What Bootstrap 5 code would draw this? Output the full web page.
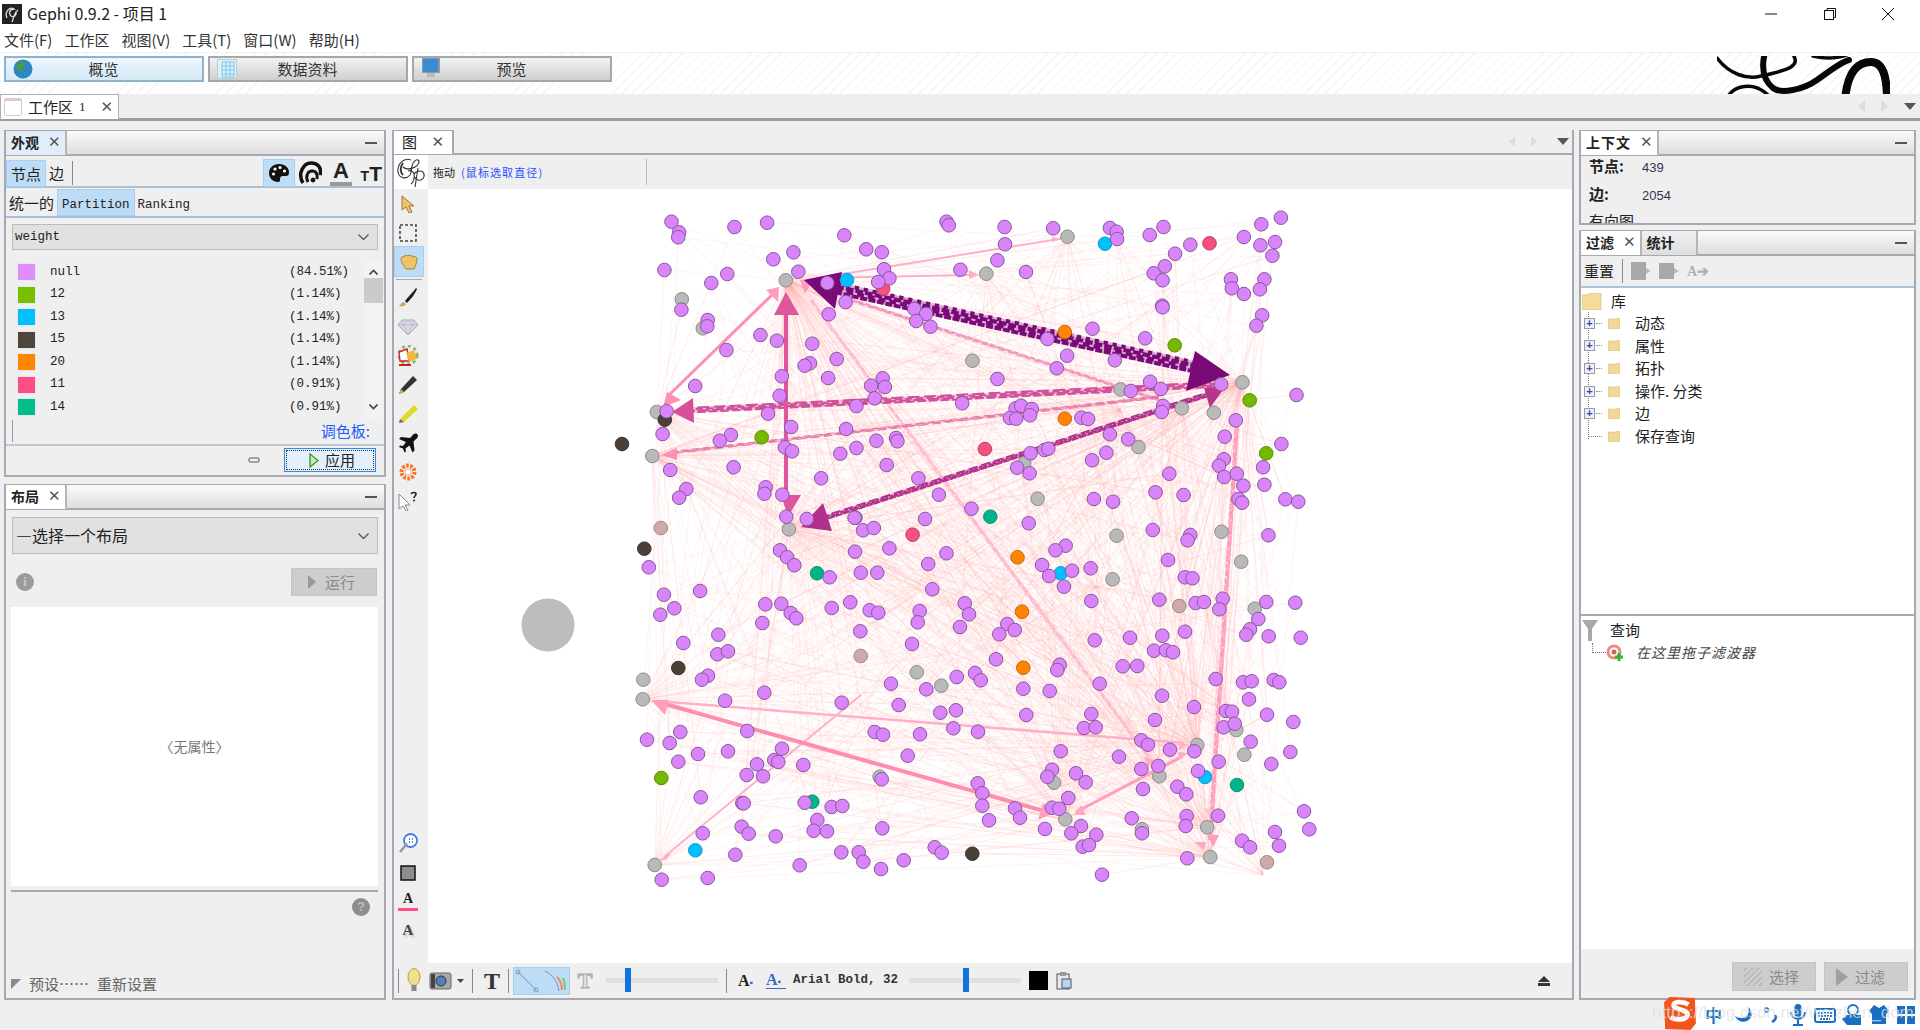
<!DOCTYPE html>
<html lang="zh-CN">
<head>
    <meta charset="UTF-8">
    <title>Gephi 0.9.2 - 项目 1</title>
    <link href="https://cdn.jsdelivr.net/npm/bootstrap@5.3.0/dist/css/bootstrap.min.css" rel="stylesheet">
    <style>
        html, body { height: 1030px; overflow: hidden; background: #efefef; }
        body { font-family: "Noto Sans CJK SC", "Liberation Sans", sans-serif; font-size: 14px; color: #222; }
        svg { display: block; flex: none; }
        .app-shell { width: 1920px; height: 1030px; }
        .title-row { height: 28px; background: #fff; padding-left: 2px; }
        .title-text { font-size: 16px; margin: -2px 0 0 5px; font-family: "Noto Sans CJK SC", "Open Sans", sans-serif; line-height: 1; }
        .win-ctrls { margin-left: auto; width: 155px; padding-right: 26px; }
        .menu-row { height: 24px; background: #fff; padding-left: 4px; gap: 12px; font-size: 15px; color: #333; line-height: 24px; }
        .persp-row { height: 42px; background: repeating-linear-gradient(135deg, #fff 0 6px, #f4f4f4 6px 7px); border-top: 1px solid #f2f2f2; padding: 3px 0 0 4px; overflow: hidden; gap: 4px; }
        .persp-btn { width: 200px; height: 26px; border: 2px solid #a4a7ae; background: linear-gradient(#f2f2f2, #cfcfcf); padding-left: 7px; color: #333; font-size: 15px; line-height: 22px; }
        .persp-btn.is-on { border-color: #8db4cf; background: linear-gradient(#eef6fc, #d4e8f6); }
        .persp-btn span { flex: 1; text-align: center; padding-right: 28px; }
        .big-logo { margin-left: auto; margin-right: 30px; }
        .doc-strip { height: 27px; border-bottom: 3px solid #9b9ea5; background: #efefef; }
        .doc-tab { width: 119px; height: 25px; background: #fff; border: 1px solid #b0b2b8; border-bottom: 0; padding-left: 3px; font-size: 15px; line-height: 24px; }
        .doc-tab .tab-no { font-family: "Liberation Serif", serif; font-size: 13px; margin-left: 6px; }
        .close-x { font-family: "DejaVu Sans", sans-serif; font-size: 15px; color: #555; line-height: 1; }
        .work-area { height: 879px; padding: 9px 4px 0 4px; gap: 6px; }
        .col-left { width: 382px; gap: 7px; }
        .col-center { width: 1182px; }
        .col-right { width: 337px; margin-left: -1px; gap: 5px; }
        .dock { border: 2px solid #a6a9b1; border-top-width: 1px; background: #efefef; overflow: hidden; }
        .dock-head { height: 25px; flex: none; border-bottom: 2px solid #a6a9b1; background: linear-gradient(#fafafa, #dedede); }
        .dock-tab { height: 24px; padding: 0 4px 0 5px; gap: 9px; font-weight: 700; font-size: 14px; line-height: 23px; background: #fff; border-right: 2px solid #b3b5bb; }
        .dock-tab.is-on { background: #e1eefa; }
        .dock-tab.is-off { background: linear-gradient(#f0f0f0, #dedede); }
        .min-dash { width: 12px; height: 2px; background: #555; margin: 0 7px 0 auto; }
        .tool-row { height: 32px; flex: none; border-bottom: 2px solid #a9c0d4; padding: 5px 2px 1px 1px; }
        .hi-box { background: #bddcf5; outline: 1px solid #a6d0f0; }
        .mode-row { height: 30px; flex: none; border-bottom: 2px solid #a9c0d4; padding: 2px 3px 1px; line-height: 25px; }
        .mode-row .serif-mono { height: 25px; line-height: 30px; }
        .serif-mono { font-family: "Liberation Mono", "Noto Sans CJK SC", monospace; font-size: 12.5px; }
        .drop-box { background: #e1e1e1; border: 1px solid #bcbcbc; }
        .weight-box { height: 26px; margin: 6px 6px 11px 6px; padding-left: 2px; line-height: 24px; }
        .legend-rows { flex: 1; padding: 0 0 0 11px; }
        .legend-row { height: 22.5px; }
        .swatch { width: 19px; height: 18px; flex: none; margin-right: 14px; border: 1px solid #e8e8e8; }
        .legend-pct { width: 75px; margin-left: auto; }
        .fake-scroll { width: 19px; margin-right: 1px; background: #f2f2f2; }
        .scroll-thumb { height: 25px; background: #cbcbcb; margin-top: 3px; }
        .palette-row { height: 28px; flex: none; border-bottom: 2px solid #bcc8d4; padding: 0 14px 0 6px; }
        .palette-tick { width: 1px; height: 22px; background: #999; }
        .palette-link { color: #1f5bff; font-size: 15px; margin-left: auto; letter-spacing: 0; }
        .apply-row { padding: 2px 8px 0 0; }
        .apply-btn { width: 92px; height: 24px; border: 1px solid #2b8fe6; background: #e3f0fb; outline: 1px dotted #333; outline-offset: -3px; padding-left: 24px; gap: 6px; line-height: 22px; font-size: 15px; }
        .layout-select { height: 37px; margin: 7px 6px 0 6px; padding-left: 3px; font-size: 16px; line-height: 35px; }
        .layout-run { padding: 14px 7px 11px 6px; }
        .info-dot { width: 18px; height: 18px; border-radius: 50%; background: #9b9b9b; color: #ccc; font: 700 12px/18px "Liberation Serif", serif; text-align: center; }
        .idle-btn { background: #cdcdcd; border: 1px solid #c4c4c4; color: #8a8a8a; font-size: 15px; line-height: 26px; }
        .run-btn { width: 86px; height: 28px; padding-left: 15px; gap: 8px; }
        .prop-box { height: 279px; flex: none; background: #fff; margin: 0 6px 0 5px; color: #777; font-size: 14px; }
        .prop-rule { height: 2px; flex: none; background: #a8a8a8; margin: 4px 6px 0 5px; }
        .help-dot { width: 18px; height: 18px; border-radius: 50%; background: #8d8d8d; color: #bdbdbd; font: 700 13px/18px "Liberation Sans", sans-serif; text-align: center; margin: 6px 14px 0 auto; }
        .preset-row { margin-top: auto; padding: 0 0 3px 5px; color: #666; font-size: 15px; line-height: 22px; }
        .graph-head { height: 25px; flex: none; border-bottom: 2px solid #a6a9b1; border-top: 0; padding-right: 3px; }
        .graph-tab { width: 60px; height: 25px; background: #fff; border: 2px solid #a6a9b1; border-bottom: 0; border-left: 0; padding: 0 8px 0 8px; font-size: 15px; }
        .graph-side { width: 34px; flex: none; background: #efefef; padding-bottom: 18px; }
        .side-logo { height: 34px; flex: none; background: #fff; }
        .side-cell { height: 29px; flex: none; margin-right: 6px; }
        .side-cell.hi-box { margin: 0 5px 0 1px; }
        .side-sep { height: 1px; background: #aaa; margin: 3px 6px 3px 2px; flex: none; }
        .graph-top { height: 34px; flex: none; background: #efefef; font-size: 11px; gap: 6px; padding-left: 5px; }
        .graph-top-end { width: 1px; height: 26px; background: #bbb; margin-left: 97px; }
        .graph-hint { color: #2a50ff; letter-spacing: 1.1px; }
        .graph-canvas { flex: 1; background: #fff; overflow: hidden; }
        .graph-bottom { height: 35px; flex: none; padding-left: 4px; }
        .bar-sep { width: 1px; height: 24px; background: #888; flex: none; }
        .hi-pair { height: 28px; width: 57px; background: #bddcf5; border: 1px solid #a6d0f0; }
        .bar-slider { width: 112px; height: 5px; background: #e0e0e0; flex: none; }
        .bar-thumb { width: 6px; height: 24px; background: #0f74dc; margin-top: -10px; }
        .font-tag { font-family: "Liberation Mono", monospace; font-size: 12.5px; width: 112px; white-space: nowrap; font-weight: 700; color: #333; }
        .black-chip { width: 19px; height: 19px; background: #000; flex: none; }
        .ctx-body { padding: 0 0 0 8px; margin-top: -3px; font-size: 15px; line-height: 25.5px; }
        .ctx-body b { width: 53px; display: inline-block; font-weight: 700; }
        .ctx-num { font-family: "Liberation Sans", sans-serif; font-size: 13px; color: #3a3050; }
        .filter-tools { height: 32px; flex: none; border-bottom: 2px solid #b0c4d8; padding-left: 3px; font-size: 15px; }
        .tree-pane { height: 328px; flex: none; background: #fff; border-bottom: 2px solid #aaa; padding: 1px 0 0 1px; font-size: 15px; }
        .tree-head { height: 24px; gap: 9px; }
        .tree-stem { margin: 0 0 0 6px; border-left: 1px dotted #777; height: 127px; padding-top: 0; margin-top: -1px; }
        .tree-item { height: 22.6px; }
        .tree-plus { width: 11px; height: 11px; border: 1px solid #9a9a9a; background: #eef; margin-left: -5px; color: #34509a; font: 700 11px/9px "Liberation Sans", sans-serif; text-align: center; flex: none; }
        .tree-dash { width: 6px; border-top: 1px dotted #888; margin: 0 6px 0 1px; flex: none; }
        .tree-dash.is-long { width: 13px; margin-left: 0; }
        .tree-label { margin-left: 15px; }
        .query-pane { flex: 1; background: #fff; padding: 2px 0 0 1px; font-size: 15px; }
        .query-tip { font-style: italic; color: #444; font-size: 14px; letter-spacing: 1px; margin-left: 12px; line-height: 20px; margin-top: -3px; }
        .query-sub { margin: -1px 0 0 10px; height: 24px; }
        .query-dash { width: 14px; height: 10px; margin-top: -10px; border-left: 1px dotted #777; border-bottom: 1px dotted #777; }
        .filter-foot { height: 49px; flex: none; padding: 13px 6px 0 0; gap: 8px; }
        .filter-btn { width: 84px; height: 29px; padding-left: 11px; gap: 7px; }
        .status-row { height: 30px; background: #efefef; }
        .ime-bar { margin-left: auto; width: 240px; height: 30px; background: #fff; color: #1b6fc2; }
        .ime-s { width: 34px; height: 35px; margin: -4px 6px 0 -17px; flex: none; }
        .ime-cell { width: 28px; }
        .ime-zh { font-size: 17px; font-weight: 700; text-align: center; line-height: 28px; margin: 0 3px 0 -3px; }
        .watermark { left: 1652px; top: 3px; color: rgba(225, 225, 225, .75); font: 17px "Liberation Sans", sans-serif; white-space: nowrap; }
    </style>
</head>
<body>
<div class="app-shell d-flex flex-column">

    <!-- barra de titulo -->
    <div class="title-row d-flex align-items-center flex-none">
        <svg width="20" height="20" viewBox="0 0 20 20"><rect width="20" height="20" fill="#222"/><path d="M5 14C2 8 8 2 12 5 8 5 6 9 9 12c3 2 6-1 5-5M10 18c2-5 2-9 6-12" fill="none" stroke="#ddd" stroke-width="1.3"/></svg>
        <div class="title-text">Gephi 0.9.2 - 项目 1</div>
        <div class="win-ctrls d-flex justify-content-between align-items-center">
            <svg width="12" height="12" viewBox="0 0 12 12"><path d="M0 6h12" stroke="#111"/></svg>
            <svg width="12" height="12" viewBox="0 0 12 12" fill="none" stroke="#111"><rect x=".5" y="2.5" width="9" height="9"/><path d="M3 2.5V.5h8.5v9h-2"/></svg>
            <svg width="12" height="12" viewBox="0 0 12 12"><path d="M0 0l12 12M12 0L0 12" stroke="#111"/></svg>
        </div>
    </div>

    <!-- menu -->
    <div class="menu-row d-flex">
        <span>文件(F)</span><span>工作区</span><span>视图(V)</span><span>工具(T)</span><span>窗口(W)</span><span>帮助(H)</span>
    </div>

    <!-- perspectivas -->
    <div class="persp-row d-flex">
        <div class="persp-btn is-on d-flex align-items-center">
            <svg width="20" height="20" viewBox="0 0 20 20"><circle cx="10" cy="10" r="9.5" fill="#2c86c8"/><path d="M6 3c3-1 6 0 7 2-1 2-3 1-4 3s2 3 1 5-3 0-4-2-3-2-3-3 2-3 3-5z" fill="#4f9a3c"/></svg>
            <span>概览</span>
        </div>
        <div class="persp-btn d-flex align-items-center">
            <svg width="20" height="20" viewBox="0 0 20 20"><rect x=".5" y=".5" width="19" height="19" fill="#dff1fb" stroke="#bcc"/><path d="M5 3h12v15H5zM5 7h12M5 11h12M5 15h12M9 3v15M13 3v15" fill="none" stroke="#7cc4ea"/></svg>
            <span>数据资料</span>
        </div>
        <div class="persp-btn d-flex align-items-center">
            <svg width="20" height="22" viewBox="0 0 20 22"><rect x="1" y="0" width="18" height="15" fill="#8c9aa8"/><rect x="2" y="1" width="15" height="13" fill="#3c8ad4"/><rect x="6" y="15" width="8" height="4" fill="#bbb"/></svg>
            <span>预览</span>
        </div>
        <svg class="big-logo" width="173" height="42" viewBox="0 0 173 42" fill="none" stroke="#050808" stroke-linecap="round">
            <path d="M0 2C12 18 30 24 44 20 72 14 86 10 74-4" stroke-width="3.5"/>
            <path d="M48-4C44 12 46 24 56 32c8 6 30 2 44-8 14-10 24-18 32-20" stroke-width="6"/>
            <path d="M10 42c6-12 26-18 42-2" stroke-width="3.5"/>
            <path d="M128 44c2-24 10-38 26-38 14 0 16 20 16 38" stroke-width="8"/>
            <path d="M96 0c12 3 24 3 36-2" stroke-width="3.5"/>
        </svg>
    </div>

    <!-- pestaña de espacio de trabajo -->
    <div class="doc-strip d-flex">
        <div class="doc-tab d-flex align-items-center">
            <svg width="18" height="18" viewBox="0 0 18 18"><rect x=".5" y=".5" width="17" height="17" rx="1" fill="#fff" stroke="#ccc"/><path d="M1 2h16" stroke="#d88"/></svg>
            <span style="margin-left:6px">工作区</span><span class="tab-no">1</span>
            <span class="close-x ms-auto" style="margin-right:5px">✕</span>
        </div>
        <div class="ms-auto d-flex align-items-center gap-3 pe-1">
            <svg width="7" height="13" viewBox="0 0 7 13"><path d="M7 0v13L0 6.5z" fill="#ddd"/></svg>
            <svg width="7" height="13" viewBox="0 0 7 13"><path d="M0 0v13l7-6.5z" fill="#ddd"/></svg>
            <svg width="12" height="7" viewBox="0 0 12 7"><path d="M0 0h12L6 7z" fill="#555"/></svg>
        </div>
    </div>

    <div class="work-area d-flex">

        <!-- columna izquierda -->
        <div class="col-left d-flex flex-column">
            <div class="dock d-flex flex-column" style="height:347px">
                <div class="dock-head d-flex align-items-center">
                    <div class="dock-tab is-on d-flex align-items-center"><span>外观</span><span class="close-x">✕</span></div>
                    <div class="min-dash"></div>
                </div>
                <div class="tool-row d-flex align-items-center">
                    <span class="hi-box px-1" style="font-size:15px;line-height:25px">节点</span>
                    <span class="px-1" style="font-size:15px">边</span>
                    <div class="bar-sep ms-1"></div>
                    <div class="hi-box ms-auto d-flex align-items-center justify-content-center" style="width:30px;height:26px">
                        <svg width="20" height="20" viewBox="0 0 20 20"><path d="M10 1C4 1 0 5 0 10s4 9 9 9c2 0 2-1 2-3s1-3 3-3h3c2 0 3-1 3-4 0-4-4-8-10-8z" fill="#111"/><circle cx="6" cy="6" r="1.6" fill="#fff"/><circle cx="11" cy="4.5" r="1.6" fill="#fff"/><circle cx="15.5" cy="8" r="1.6" fill="#fff"/><circle cx="4.5" cy="11" r="1.6" fill="#fff"/></svg>
                    </div>
                    <svg class="ms-1" width="24" height="24" viewBox="0 0 24 24" fill="none" stroke="#111"><path d="M5 22C-1 12 6 2 13 2c7 0 11 5 9 12" stroke-width="3.5"/><path d="M10 21c-3-6 0-11 4-11s6 3 5 8" stroke-width="3"/><circle cx="15" cy="19" r="2" fill="#111"/></svg>
                    <div class="ms-2 text-center" style="width:22px;line-height:1">
                        <span style="font:700 22px/20px 'Liberation Sans',sans-serif">A</span>
                        <div style="height:4px;background:#999;margin-top:1px"></div>
                    </div>
                    <div class="ms-1" style="font:700 21px/1 'Liberation Sans',sans-serif;width:26px;text-align:right"><span style="font-size:14px">T</span>T</div>
                </div>
                <div class="mode-row d-flex align-items-center">
                    <span style="font-size:15px">统一的</span>
                    <span class="hi-box serif-mono px-1 ms-1">Partition</span>
                    <span class="serif-mono ms-1">Ranking</span>
                </div>
                <div class="drop-box weight-box d-flex align-items-center justify-content-between flex-none">
                    <span class="serif-mono">weight</span>
                    <svg class="me-2" width="11" height="6" viewBox="0 0 11 6" fill="none" stroke="#555" stroke-width="1.3"><path d="M.5.5l5 5 5-5"/></svg>
                </div>
                <div class="d-flex flex-none" style="height:157px">
                    <div class="legend-rows serif-mono" id="legendRows"></div>
                    <div class="fake-scroll d-flex flex-column align-items-center pt-2 pb-2">
                        <svg width="9" height="6" viewBox="0 0 9 6" fill="none" stroke="#444" stroke-width="1.6"><path d="M.5 5.5l4-4 4 4"/></svg>
                        <div class="scroll-thumb w-100"></div>
                        <svg class="mt-auto" width="9" height="6" viewBox="0 0 9 6" fill="none" stroke="#444" stroke-width="1.6"><path d="M.5.5l4 4 4-4"/></svg>
                    </div>
                </div>
                <div class="palette-row d-flex align-items-center">
                    <div class="palette-tick"></div>
                    <span class="palette-link">调色板:</span>
                </div>
                <div class="apply-row d-flex align-items-center justify-content-end">
                    <svg class="me-4" width="12" height="6" viewBox="0 0 12 6" fill="none" stroke="#888" stroke-width="1.5"><rect x="1" y="1" width="10" height="4" rx="2"/></svg>
                    <div class="apply-btn d-flex align-items-center">
                        <svg width="10" height="15" viewBox="0 0 10 15"><path d="M1 1l8 6.5L1 14z" fill="#cfe8b8" stroke="#3c9a2e" stroke-width="1.4"/></svg>
                        <span>应用</span>
                    </div>
                </div>
            </div>

            <div class="dock d-flex flex-column" style="height:516px">
                <div class="dock-head d-flex align-items-center">
                    <div class="dock-tab d-flex align-items-center"><span>布局</span><span class="close-x">✕</span></div>
                    <div class="min-dash"></div>
                </div>
                <div class="drop-box layout-select d-flex align-items-center justify-content-between flex-none">
                    <span>—选择一个布局</span>
                    <svg class="me-2" width="11" height="6" viewBox="0 0 11 6" fill="none" stroke="#555" stroke-width="1.3"><path d="M.5.5l5 5 5-5"/></svg>
                </div>
                <div class="layout-run d-flex align-items-center justify-content-between flex-none">
                    <div class="info-dot ms-1">i</div>
                    <div class="idle-btn run-btn d-flex align-items-center">
                        <svg width="10" height="16" viewBox="0 0 10 16"><path d="M1 1l8 7-8 7z" fill="#999"/></svg><span>运行</span>
                    </div>
                </div>
                <div class="prop-box d-flex align-items-center justify-content-center">〈无属性〉</div>
                <div class="prop-rule"></div>
                <div class="help-dot">?</div>
                <div class="preset-row d-flex align-items-center">
                    <svg width="10" height="10" viewBox="0 0 10 10"><path d="M0 0h10L0 10z" fill="#888"/></svg>
                    <span class="ms-2">预设……</span><span class="ms-2">重新设置</span>
                </div>
            </div>
        </div>

        <!-- panel del grafo -->
        <div class="col-center dock d-flex flex-column" style="border-top:0;background:#efefef">
            <div class="graph-head d-flex align-items-center">
                <div class="graph-tab d-flex align-items-center justify-content-between"><span>图</span><span class="close-x">✕</span></div>
                <div class="ms-auto d-flex align-items-center gap-3">
                    <svg width="6" height="11" viewBox="0 0 6 11"><path d="M6 0v11L0 5.5z" fill="#ddd"/></svg>
                    <svg width="6" height="11" viewBox="0 0 6 11"><path d="M0 0v11l6-5.5z" fill="#ddd"/></svg>
                    <svg class="ms-1" width="12" height="7" viewBox="0 0 12 7"><path d="M0 0h12L6 7z" fill="#555"/></svg>
                </div>
            </div>
            <div class="d-flex flex-grow-1" style="min-height:0">
                <div class="graph-side d-flex flex-column">
                    <div class="side-logo d-flex align-items-center justify-content-center">
                        <svg width="32" height="32" viewBox="0 0 32 32" fill="none" stroke="#333" stroke-width="1.1"><path d="M16 4C9 1 2 8 3 16c1 6 8 8 12 3 2-3 1-6 2-9 1-4 4-7 6-6s1 5-3 7c-5 3-10 2-12 0M13 15c3-1 5 0 6 3 1 4-1 9-3 10M19 18c3-4 9-4 10 0s-3 7-6 6-4-3-4-6M23 12c-1 6-2 13-3 19"/><path d="M8 7c-3 4-3 9 0 12" stroke-width="1.8"/></svg>
                    </div>
                    <div class="side-cell d-flex align-items-center justify-content-center"><svg width="14" height="18" viewBox="0 0 14 18"><path d="M1 1l12 10H8l3 6-3 1-3-6-4 3z" fill="#e8c46c" stroke="#a07a2c"/></svg></div>
                    <div class="side-cell d-flex align-items-center justify-content-center"><svg width="18" height="18" viewBox="0 0 18 18"><rect x="1" y="1" width="16" height="16" fill="none" stroke="#444" stroke-width="1.6" stroke-dasharray="3 2"/></svg></div>
                    <div class="side-cell hi-box d-flex align-items-center justify-content-center"><svg width="18" height="16" viewBox="0 0 18 16"><path d="M1 5c0-2 2-3 3-2 0-2 3-2 3-1 1-1 3-1 3 0 1-1 3 0 3 1 2-1 4 0 4 2 0 5-2 7-3 10H6C4 12 1 9 1 5z" fill="#eec468" stroke="#8a6a28" stroke-width=".7"/></svg></div>
                    <div class="side-sep"></div>
                    <div class="side-cell d-flex align-items-center justify-content-center"><svg width="20" height="22" viewBox="0 0 20 22"><path d="M18 1C15 5 10 10 7 14l2 2c4-4 8-9 10-14z" fill="#222"/><path d="M6 15c-2 0-3 2-5 4 3 1 6 0 7-2z" fill="#c9a56a"/></svg></div>
                    <div class="side-cell d-flex align-items-center justify-content-center"><svg width="20" height="16" viewBox="0 0 20 16"><path d="M4 1h12l4 5-10 10L0 6z" fill="#d8d8e8" stroke="#aaa"/><path d="M0 6h20M6 6l4 10 4-10M4 1l2 5 4-5 4 5 2-5" fill="none" stroke="#b4b4c8" stroke-width=".7"/></svg></div>
                    <div class="side-cell d-flex align-items-center justify-content-center"><svg width="22" height="22" viewBox="0 0 22 22"><circle cx="11" cy="10" r="9" fill="none" stroke="#8ab878" stroke-width="3" stroke-dasharray="3 3"/><path d="M2 7l8-3 2 12H3z" fill="#fff" stroke="#c22" stroke-width="1.4"/><path d="M9 8l8-3 3 9-8 3z" fill="#efbb3c"/><path d="M2 20h12" stroke="#c22" stroke-width="2"/></svg></div>
                    <div class="side-cell d-flex align-items-center justify-content-center"><svg width="20" height="20" viewBox="0 0 20 20"><path d="M15 1l4 4L6 17l-5 2 2-5z" fill="#333"/><path d="M3 14l3 3-5 2z" fill="#c8a868"/></svg></div>
                    <div class="side-cell d-flex align-items-center justify-content-center"><svg width="20" height="20" viewBox="0 0 20 20"><path d="M16 1l4 4L6 18l-4-3z" fill="#dcdc28"/><path d="M2 15l4 3-5 1z" fill="#666"/></svg></div>
                    <div class="side-cell d-flex align-items-center justify-content-center"><svg width="20" height="20" viewBox="0 0 20 20"><path d="M19 1c-2-1-4 0-5 2l-2 2-9-1-2 2 7 3-3 4-3-.5-1 1.500 4 1.500 1.500 4 1.500-1-.5-3 4-3 3 7 2-2-1-9 2-2c2-1 3-3 2-5z" fill="#111"/></svg></div>
                    <div class="side-cell d-flex align-items-center justify-content-center"><svg width="18" height="18" viewBox="0 0 18 18"><circle cx="9" cy="9" r="6.5" fill="none" stroke="#f5762a" stroke-width="4" stroke-dasharray="2.6 1.400"/><circle cx="9" cy="9" r="3.2" fill="#fff" stroke="#f5a070"/></svg></div>
                    <div class="side-cell d-flex align-items-center justify-content-center"><svg width="20" height="20" viewBox="0 0 20 20"><path d="M1 3l11 11H7l3 5-2 1-3-5-4 3z" fill="#fff" stroke="#888"/><path d="M13 3c1-2 5-2 5 0 0 2-2 2-2 4" fill="none" stroke="#222" stroke-width="1.6"/><circle cx="16" cy="9.500" r="1" fill="#222"/></svg></div>

                    <div class="side-cell mt-auto d-flex align-items-center justify-content-center"><svg width="20" height="22" viewBox="0 0 20 22"><circle cx="12.500" cy="7.500" r="6.500" fill="#fff" stroke="#4a78e8" stroke-width="1.800"/><path d="M9 10.500L2 19" stroke="#999" stroke-width="2.500"/><path d="M11 6h1M14 6h1M11 9h1M14 9h1" stroke="#4a78e8" stroke-width="1.800"/></svg></div>
                    <div class="side-cell d-flex align-items-center justify-content-center"><svg width="16" height="16" viewBox="0 0 16 16"><rect x="1" y="1" width="14" height="14" fill="#8f8f8f" stroke="#111" stroke-width="1.500"/></svg></div>
                    <div class="side-cell d-flex flex-column align-items-center justify-content-center" style="font:700 14px/14px 'Liberation Serif',serif"><span>A</span><div style="width:20px;height:3px;background:#ff4d85;margin-top:2px"></div></div>
                    <div class="side-cell d-flex align-items-center justify-content-center" style="font:700 15px/1 'Liberation Serif',serif;color:#444;text-shadow:2px 2px 2px #ccc">A</div>
                </div>
                <div class="d-flex flex-column flex-grow-1" style="min-width:0">
                    <div class="graph-top d-flex align-items-center">
                        <span>拖动</span><span class="graph-hint">(鼠标选取直径)</span><div class="graph-top-end"></div>
                    </div>
                    <div class="graph-canvas">
                        <svg id="graphCanvas" width="1146" height="773" viewBox="427 189 1146 773"></svg>
                    </div>
                </div>
            </div>
            <div class="graph-bottom d-flex align-items-center">
                <div class="bar-sep"></div>
                <svg class="ms-2" width="14" height="26" viewBox="0 0 14 26"><ellipse cx="7" cy="9" rx="6" ry="8.500" fill="#f0e08c" stroke="#b8a050"/><rect x="4.500" y="17" width="5" height="6" fill="#888"/></svg>
                <svg class="ms-2" width="24" height="20" viewBox="0 0 24 20"><rect x="1" y="2" width="21" height="16" rx="2" fill="#a8a8a8" stroke="#666"/><circle cx="12" cy="10" r="5" fill="#557fc0" stroke="#333"/><rect x="2" y="3" width="4" height="14" fill="#444"/></svg>
                <svg class="ms-1" width="7" height="4" viewBox="0 0 7 4"><path d="M0 0h7L3.500 4z" fill="#444"/></svg>
                <div class="bar-sep ms-2"></div>
                <div style="font:900 24px/1 'Liberation Serif',serif;color:#333;margin:0 8px 0 11px">T</div>
                <div class="bar-sep"></div>
                <div class="hi-pair d-flex ms-1 flex-none">
                    <svg width="28" height="26" viewBox="0 0 28 26" fill="none" stroke="#7496b8"><path d="M4 4l18 18"/><circle cx="4" cy="4" r="2"/><circle cx="22" cy="22" r="2"/></svg>
                    <svg width="28" height="26" viewBox="0 0 28 26" fill="none"><path d="M3 3c8 4 12 10 14 20" stroke="#7496b8"/><path d="M20 22c0-6-2-10-5-13" stroke="#e86" stroke-width="2"/><path d="M23 22c0-5 0-8-2-12" stroke="#7c6" stroke-width="2"/></svg>
                </div>
                <div style="font:700 22px/1 'Liberation Serif',serif;color:#e4e4e4;-webkit-text-stroke:1px #aaa;width:26px;text-align:center;margin-left:2px">T</div>
                <div class="bar-slider ms-2"><div class="bar-thumb" style="margin-left:19px"></div></div>
                <div class="bar-sep ms-2"></div>
                <div style="font:700 16px/1 'Liberation Serif',serif;width:20px;margin-left:11px">A<span style="color:#2a70d8;font-size:10px">▪</span></div>
                <div class="ms-2" style="font:700 16px/1 'Liberation Serif',serif;width:20px;color:#3a6ac8;border-bottom:1px solid #3a6ac8">A<span style="font-size:10px">▪</span></div>
                <div class="font-tag" style="margin-left:7px">Arial Bold, 32</div>
                <div class="bar-slider ms-1"><div class="bar-thumb" style="margin-left:54px"></div></div>
                <div class="black-chip ms-2"></div>
                <svg class="ms-2" width="16" height="18" viewBox="0 0 16 18"><rect x="1" y="2" width="12" height="15" fill="#e8e8e8" stroke="#555"/><rect x="4" y="0" width="6" height="4" fill="#999"/><rect x="6" y="7" width="9" height="9" fill="#bcd4f0" stroke="#456"/></svg>
                <svg class="ms-auto" style="margin-right:22px" width="12" height="10" viewBox="0 0 12 10"><path d="M6 0l6 6H0z" fill="#333"/><rect y="7" width="12" height="3" fill="#333"/></svg>
            </div>
        </div>

        <!-- columna derecha -->
        <div class="col-right d-flex flex-column">
            <div class="dock d-flex flex-column" style="height:95px">
                <div class="dock-head d-flex align-items-center">
                    <div class="dock-tab d-flex align-items-center"><span style="letter-spacing:1px">上下文</span><span class="close-x">✕</span></div>
                    <div class="min-dash"></div>
                </div>
                <div class="ctx-body">
                    <div><b>节点:</b><span class="ctx-num">439</span></div>
                    <div><b>边:</b><span class="ctx-num">2054</span></div>
                    <div>有向图</div>
                </div>
            </div>
            <div class="dock d-flex flex-column" style="height:770px">
                <div class="dock-head d-flex align-items-center">
                    <div class="dock-tab d-flex align-items-center"><span>过滤</span><span class="close-x">✕</span></div>
                    <div class="dock-tab is-off" style="padding-right:21px;">统计</div>
                    <div class="min-dash"></div>
                </div>
                <div class="filter-tools d-flex align-items-center">
                    <span>重置</span>
                    <div class="bar-sep ms-2"></div>
                    <svg class="ms-2" width="20" height="18" viewBox="0 0 20 18"><rect width="15" height="18" fill="#a8a8a8"/><path d="M15 6l5 3-5 3z" fill="#bbb"/></svg>
                    <svg class="ms-2" width="20" height="16" viewBox="0 0 20 16"><rect width="15" height="16" fill="#a8a8a8"/><path d="M15 5l5 3-5 3z" fill="#bbb"/></svg>
                    <span class="ms-2" style="font:700 14px 'Liberation Serif',serif;color:#b0b0b0">A➔</span>
                </div>
                <div class="tree-pane">
                    <div class="tree-head d-flex align-items-center">
                        <svg width="20" height="17" viewBox="0 0 20 17"><path d="M0 2h6l1-2h12v17H0z" fill="#f6dc9a" stroke="#d8b868" stroke-width=".6"/></svg>
                        <span>库</span>
                    </div>
                    <div class="tree-stem" id="treeStem"></div>
                </div>
                <div class="query-pane">
                    <div class="tree-head d-flex align-items-center">
                        <svg width="16" height="21" viewBox="0 0 16 21"><path d="M0 0h16L10 9v12H6V9z" fill="#a9a9a9"/></svg>
                        <span style="margin-left:3px">查询</span>
                    </div>
                    <div class="query-sub d-flex align-items-center">
                        <div class="query-dash"></div>
                        <svg width="18" height="18" viewBox="0 0 18 18"><circle cx="8" cy="8" r="7.500" fill="#f08a8a"/><circle cx="8" cy="8" r="4.500" fill="#fff"/><circle cx="8" cy="8" r="2.500" fill="#e25c5c"/><path d="M13 9v8M9 13h8" stroke="#2eb82e" stroke-width="3"/></svg>
                        <span class="query-tip">在这里拖子滤波器</span>
                    </div>
                </div>
                <div class="filter-foot d-flex justify-content-end">
                    <div class="idle-btn filter-btn d-flex align-items-center">
                        <svg width="18" height="18" viewBox="0 0 18 18"><rect width="18" height="18" fill="#bdbdbd"/><path d="M0 6l6-6M0 12L12 0M0 18L18 0M6 18L18 6M12 18l6-6" stroke="#d6d6d6" stroke-width="1.500"/></svg><span>选择</span>
                    </div>
                    <div class="idle-btn filter-btn d-flex align-items-center">
                        <svg width="12" height="18" viewBox="0 0 12 18"><path d="M0 0l12 9-12 9z" fill="#a0a0a0"/></svg><span>过滤</span>
                    </div>
                </div>
            </div>
        </div>
    </div>

    <!-- barra de estado e IME -->
    <div class="status-row d-flex position-relative">
        <div class="ime-bar d-flex align-items-center">
            <svg class="ime-s" viewBox="0 0 30 33"><path d="M5 1l24 1 1 24-5 6-24-1L0 6z" fill="#f1541c"/><path d="M23 8c-5-3-14-3-14 1 0 4 14 3 13 9-1 5-11 5-16 2" fill="none" stroke="#fff" stroke-width="4.500"/></svg>
            <div class="ime-cell ime-zh">中</div>
            <div class="ime-cell d-flex justify-content-center"><svg width="18" height="16" viewBox="0 0 18 16"><path d="M13 0c2 5 0 10-6 11-3 0-5-1-7-2 2 5 8 7 12 5 6-3 6-10 1-14z" fill="#1b6fc2"/></svg></div>
            <div class="ime-cell d-flex justify-content-center"><svg width="14" height="16" viewBox="0 0 14 16"><circle cx="2.500" cy="3" r="2" fill="none" stroke="#1b6fc2" stroke-width="1.500"/><path d="M11 8c1 2 1 5-3 7" fill="none" stroke="#1b6fc2" stroke-width="2.500"/></svg></div>
            <div class="ime-cell d-flex justify-content-center"><svg width="16" height="22" viewBox="0 0 16 22"><rect x="4.500" y="0" width="7" height="13" rx="3.500" fill="#1b6fc2"/><path d="M1 8c0 9 14 9 14 0M8 15v5M3 21h10" fill="none" stroke="#1b6fc2" stroke-width="2"/></svg></div>
            <div class="ime-cell d-flex justify-content-center"><svg width="22" height="15" viewBox="0 0 22 15"><rect x="1" y="1" width="20" height="13" rx="2" fill="none" stroke="#1b6fc2" stroke-width="2"/><path d="M4 5h14M4 8h14M6 11h10" stroke="#1b6fc2" stroke-width="1.800" stroke-dasharray="2 1"/></svg></div>
            <div class="ime-cell d-flex justify-content-center"><svg width="20" height="22" viewBox="0 0 20 22"><circle cx="11" cy="6" r="5" fill="none" stroke="#1b6fc2" stroke-width="2"/><path d="M0 15l5-4h14v10H5z" fill="#1b6fc2"/></svg></div>
            <div class="ime-cell d-flex justify-content-center"><svg width="20" height="20" viewBox="0 0 20 20"><path d="M5 0l5 3 5-3 5 6-3 3v10H3V9L0 6z" fill="#1b6fc2"/></svg></div>
            <div class="ime-cell d-flex justify-content-center"><svg width="18" height="18" viewBox="0 0 18 18"><path d="M0 0h8v8H0zM10 0h8v8h-8zM0 10h8v8H0zM10 10h8v8h-8z" fill="#1b6fc2"/></svg></div>
        </div>
        <div class="watermark position-absolute">https://blog.csdn.net/weizhen_dom</div>
    </div>
</div>

<script src="https://cdn.jsdelivr.net/npm/bootstrap@5.3.0/dist/js/bootstrap.bundle.min.js"></script>
<script>
    // leyenda
    const legend = [['#df8cff','null','(84.51%)'],['#76c000','12','(1.14%)'],['#00bfff','13','(1.14%)'],['#4f463c','15','(1.14%)'],['#ff8400','20','(1.14%)'],['#ff4d85','11','(0.91%)'],['#00bd8c','14','(0.91%)']];
    document.getElementById('legendRows').innerHTML = legend.map(r =>
        `<div class="legend-row d-flex align-items-center"><div class="swatch" style="background:${r[0]}"></div><span>${r[1]}</span><span class="legend-pct">${r[2]}</span></div>`).join('');

    // arbol de filtros
    const treeItems = ['动态','属性','拓扑','操作. 分类','边','保存查询'];
    document.getElementById('treeStem').innerHTML = treeItems.map((t, i) => {
        const lead = i < 5 ? '<div class="tree-plus">+</div><div class="tree-dash"></div>' : '<div class="tree-dash is-long" style="margin-right:6px"></div>';
        return `<div class="tree-item d-flex align-items-center">${lead}<svg width="12" height="11" viewBox="0 0 12 11"><path d="M0 1h8l1-1h3v11H0z" fill="#f2d898" stroke="#d4b46c" stroke-width=".5"/></svg><span class="tree-label">${t}</span></div>`;
    }).join('');

    // ---- grafo: posiciones leidas de los recortes de la captura ----
    const crop7 = [600, 200, 2.24, 3], crop9 = [600, 560, 3, 3], crop10 = [950, 560, 3, 3];
    const toFull = (c, arr) => { const out = []; for (let i = 0; i < arr.length; i += 2) out.push([c[0] + arr[i] / c[2], c[1] + arr[i + 1] / c[3]]); return out; };

    const purple = [].concat(
        toFull(crop7, [158,65,175,97,173,112,299,81,372,68,545,106,594,148,629,157,431,157,386,178,442,215,283,222,142,210,247,249,774,65,779,76,904,81,905,133,888,181,805,209,952,216,634,208,646,235,621,246,507,249,548,306,510,343,702,327,728,342,706,363,738,380,1013,85,1140,84,1155,95,1156,117,1229,105,1260,81,1320,134,1286,161,1263,199,1238,220,1258,241,1440,111,1479,73,1523,53,1477,136,1510,126,1504,167,1411,238,1486,238,1413,265,1476,268,1440,282,1481,346,1468,377,1257,317,1258,322,1101,386,1219,415,1000,417,1044,467,1151,481,1021,505,888,537,180,329,239,360,238,379,357,405,394,422,473,431,281,450,528,477,468,490,456,497,509,534,405,529,631,535,605,557,636,561,613,595,400,587,572,618,211,558,809,610,374,641,426,681,549,687,291,705,266,722,138,702,147,634,617,722,661,714,664,724,572,744,536,761,412,742,428,754,297,802,155,810,640,795,711,835,493,835,369,862,366,881,406,884,191,867,175,893,757,884,830,926,958,970,726,957,570,953,568,953,587,991,611,984,415,950,461,957,1187,573,1230,545,1254,567,1259,618,1256,636,1389,553,1422,661,1397,710,1524,732,1483,802,1395,778,1384,797,1396,831,1424,821,1439,857,1486,854,1428,897,1436,908,1533,898,1562,905,1558,585,929,625,941,617,965,627,961,646,916,654,930,656,1076,653,1091,657,1140,703,1181,718,1132,758,1100,781,962,760,993,750,1002,746,932,803,960,820,1273,821,1242,877,1305,885,1104,897,1147,905,1236,990,1320,1005,1314,1021,1495,1006,1041,1037,1018,1051,988,1095,1004,1128,1055,1112,1097,1105,1037,1160,1270,1080,1308,1132,1325,1135,646,1045,569,1055,774,1060,733,1092,401,1051,417,1072,433,1096,107,1102,582,1118,619,1118,512,1132,742,1168,222,1173,141,1184]),
        toFull(crop9, [493,133,541,131,569,159,586,175,484,189,692,144,748,127,806,151,832,158,956,153,950,187,220,145,178,164,352,224,247,249,349,283,381,274,321,347,303,359,778,214,933,252,870,371,976,388,893,435,1018,458,372,422,490,398,722,428,821,516,846,524,957,523,920,587,238,516,206,549,138,539,291,582,381,574,232,605,439,513,543,566,520,600,532,606,468,613,437,645,486,649,607,615,842,658,299,712,424,729,428,730,611,728,692,741,724,738,649,780,638,812,678,814,422,800,443,821,305,820,524,829,844,805,403,884,721,877,773,877,787,905,840,927,908,901,1001,862,1022,878,596,916,182,959,320,954]),
        toFull(crop10, [41,130,54,163,27,201,169,192,145,223,191,210,135,298,421,123,625,119,734,129,759,126,815,116,805,148,946,126,1033,128,922,177,897,208,886,224,953,229,1049,233,702,215,634,227,537,233,431,241,609,272,645,271,666,277,515,319,559,318,326,314,319,330,72,339,89,361,17,351,217,386,296,393,446,371,794,357,876,367,902,364,968,360,985,367,894,418,633,407,729,441,825,453,843,455,948,464,15,451,226,465,421,462,612,480,1027,486,818,502,851,491,399,504,434,502,81,515,7,505,571,541,591,554,657,569,730,574,899,545,329,574,504,590,1018,576,803,605,961,612,571,627,622,618,741,633,303,629,289,650,375,640,404,667,80,670,94,700,94,737,576,687,679,680,706,703,352,714,192,745,207,773,114,781,303,743,325,746,542,775,707,768,801,767,704,798,1059,754,1075,808,972,816,984,857,873,842,897,862,390,798,436,824,361,820,282,807,395,860,414,855,573,820,709,895,453,944])
    );

    const specials = [
        ['#b9b9b9', '#8b8b8b', [].concat(
            toFull(crop7, [414,241,181,298,228,385,863,221,1045,110,1437,547,1164,568,1301,625,1373,638,832,482,125,636,115,768,1204,741,948,790,978,896,421,988,1155,1007,1390,995,1434,1085,1146,1138]),
            toFull(crop9, [127,359,125,418,947,337,1021,377,836,650,161,915]),
            toFull(crop10, [911,146,856,510,739,555,880,584,625,649,309,668,343,778,573,808,769,802,778,891]))],
        ['#cdaaa8', '#9a8a88', [].concat(toFull(crop7, [134,984]), toFull(crop9, [779,288]), toFull(crop10, [685,138,948,907]))],
        ['#4a4038', '#3a3430', [].concat(toFull(crop7, [143,659,47,732,97,1046]), toFull(crop9, [232,324]), toFull(crop10, [64,881]))],
        ['#74b800', '#5a9000', [].concat(toFull(crop7, [360,712,1285,436,1453,601,1490,760]), toFull(crop9, [181,654]))],
        ['#00bfff', '#1898c8', [].concat(toFull(crop7, [551,240,1129,131,1030,1120]), toFull(crop9, [283,871]), toFull(crop10, [762,651]))],
        ['#f74f80', '#b84060', toFull(crop7, [632,266,1363,130,860,747,698,1004])],
        ['#ff8400', '#c06a10', [].concat(toFull(crop7, [1039,396,1039,656,933,1072]), toFull(crop10, [213,155,217,323]))],
        ['#00b38a', '#109070', [].concat(toFull(crop7, [872,950,484,1120]), toFull(crop9, [634,725]), toFull(crop10, [858,675]))]
    ];

    // aristas claras de fondo, generadas con semilla fija
    let seed = 20540439;
    const rnd = () => { seed = (seed + 0x6D2B79F5) | 0; let t = Math.imul(seed ^ (seed >>> 15), 1 | seed); t = (t + Math.imul(t ^ (t >>> 7), 61 | t)) ^ t; return ((t ^ (t >>> 14)) >>> 0) / 4294967296; };
    const hubs = [[785,280,16],[1241,382,16],[656,412,6],[651,456,6],[788,529,9],[654,865,4],[642,699,5],[1064,819,8],[1209,857,9],[1206,827,8],[1196,745,10],[1158,776,8],[1066,237,4],[985,274,3],[1119,409,6],[1181,408,6],[1262,875,3],[1228,710,5],[1096,587,3],[1000,600,3]];
    const hubBag = []; hubs.forEach(h => { for (let i = 0; i < h[2]; i++) hubBag.push(h); });

    let svg = '';
    for (let i = 0; i < 1500; i++) {
        const a = purple[Math.floor(rnd() * purple.length)];
        const b = hubBag[Math.floor(rnd() * hubBag.length)];
        svg += `<line x1="${a[0].toFixed(1)}" y1="${a[1].toFixed(1)}" x2="${b[0]}" y2="${b[1]}" stroke="#ffb4b4" stroke-opacity=".14"/>`;
    }

    // aristas gruesas con textura
    function rough(x1, y1, x2, y2, w, col, dashed) {
        let s = `<line x1="${x1}" y1="${y1}" x2="${x2}" y2="${y2}" stroke="${col}" stroke-width="${w}" stroke-opacity="${dashed ? .3 : 1}"/>`;
        if (dashed) {
            const len = Math.hypot(x2 - x1, y2 - y1), nx = -(y2 - y1) / len, ny = (x2 - x1) / len;
            for (let k = 0; k < 4; k++) {
                const off = (k - 1.5) * w / 4;
                s += `<line x1="${x1 + nx * off}" y1="${y1 + ny * off}" x2="${x2 + nx * off}" y2="${y2 + ny * off}" stroke="${col}" stroke-width="${w / 3}" stroke-dasharray="${(3 + rnd() * 9).toFixed(1)} ${(1 + rnd() * 4).toFixed(1)}"/>`;
            }
        }
        return s;
    }
    const tri = (pts, col) => `<polygon points="${pts}" fill="${col}"/>`;

    svg += rough(810,300,1147,757,3,'#ffb4cc',true);
    svg += rough(1236,423,1209,840,4,'#ff9dbd',true);
    svg += rough(663,857,860,695,2,'#ffb0c8',false);
    svg += rough(668,702,1183,743,2.5,'#ffb0c8',false);
    svg += rough(664,704,1050,813,4,'#ff8db0',false);
    svg += rough(1075,812,1180,757,3,'#ff9dbd',false);
    svg += rough(805,280,1064,238,2,'#ffb0c8',false);
    svg += rough(815,278,970,275,2,'#ffb0c8',false);
    svg += rough(841,297,1158,400,3,'#f090b8',true);
    svg += rough(776,290,668,395,3,'#ff8fb0',false);
    svg += rough(1158,397,676,452,3,'#e878a8',true);
    svg += rough(1214,392,826,517,5,'#b0308c',true);
    svg += rough(1226,384,692,410,6,'#d0509a',true);
    svg += rough(785,315,785,497,4,'#e0559c',false);
    svg += rough(835,288,1198,368,12,'#7a0a78',true);

    svg += tri('785,292 773,315 798,315', '#e0559c') + tri('780,495 800,495 787,517', '#e0559c');
    svg += tri('692,398 671,412 693,423', '#d84f94') + tri('666,392 680,400 662,407', '#ff8fb0');
    svg += tri('676,448 660,455 676,460', '#ff8fb0') + tri('822,503 800,527 831,531', '#b0308c');
    svg += tri('1203,388 1224,387 1209,408', '#b8358c');
    svg += tri('765,290 778,287 777,302', '#ff9dbd') + tri('799,280 813,278 804,294', '#ff9dbd');
    svg += tri('1051,237 1060,239 1051,242', '#ffb0c8') + tri('968,270 978,275 968,279', '#ffb0c8');
    svg += tri('803,280 841,272 834,309', '#7a0a78') + tri('1194,351 1229,375 1185,391', '#7a0a78');
    svg += tri('668,700 650,700 664,715', '#ff9dbd') + tri('1042,803 1055,812 1037,820', '#ff9dbd');
    svg += tri('1073,815 1085,815 1080,805', '#ffa8c4') + tri('1177,752 1187,753 1178,760', '#ffa8c4');
    svg += tri('1143,757 1153,760 1147,767', '#ffa8c4') + tri('1178,742 1187,745 1178,750', '#ffb4cc');
    svg += tri('1193,842 1205,842 1203,850', '#ffa8c4') + tri('1207,835 1218,835 1212,847', '#ff9dbd');
    svg += tri('1203,808 1213,810 1208,817', '#ffc0d0') + tri('658,860 670,853 665,860', '#ffb0c8');
    svg += '<circle cx="547" cy="625" r="26.500" fill="#bdbdbd"/>';

    const dot = (p, fill, stroke) => `<circle cx="${p[0].toFixed(1)}" cy="${p[1].toFixed(1)}" r="6.800" fill="${fill}" stroke="${stroke}"/>`;
    specials.forEach(g => g[2].forEach(p => { svg += dot(p, g[0], g[1]); }));
    purple.forEach(p => { svg += dot(p, '#da84fb', '#85589c'); });

    document.getElementById('graphCanvas').innerHTML = svg;
</script>
</body>
</html>
